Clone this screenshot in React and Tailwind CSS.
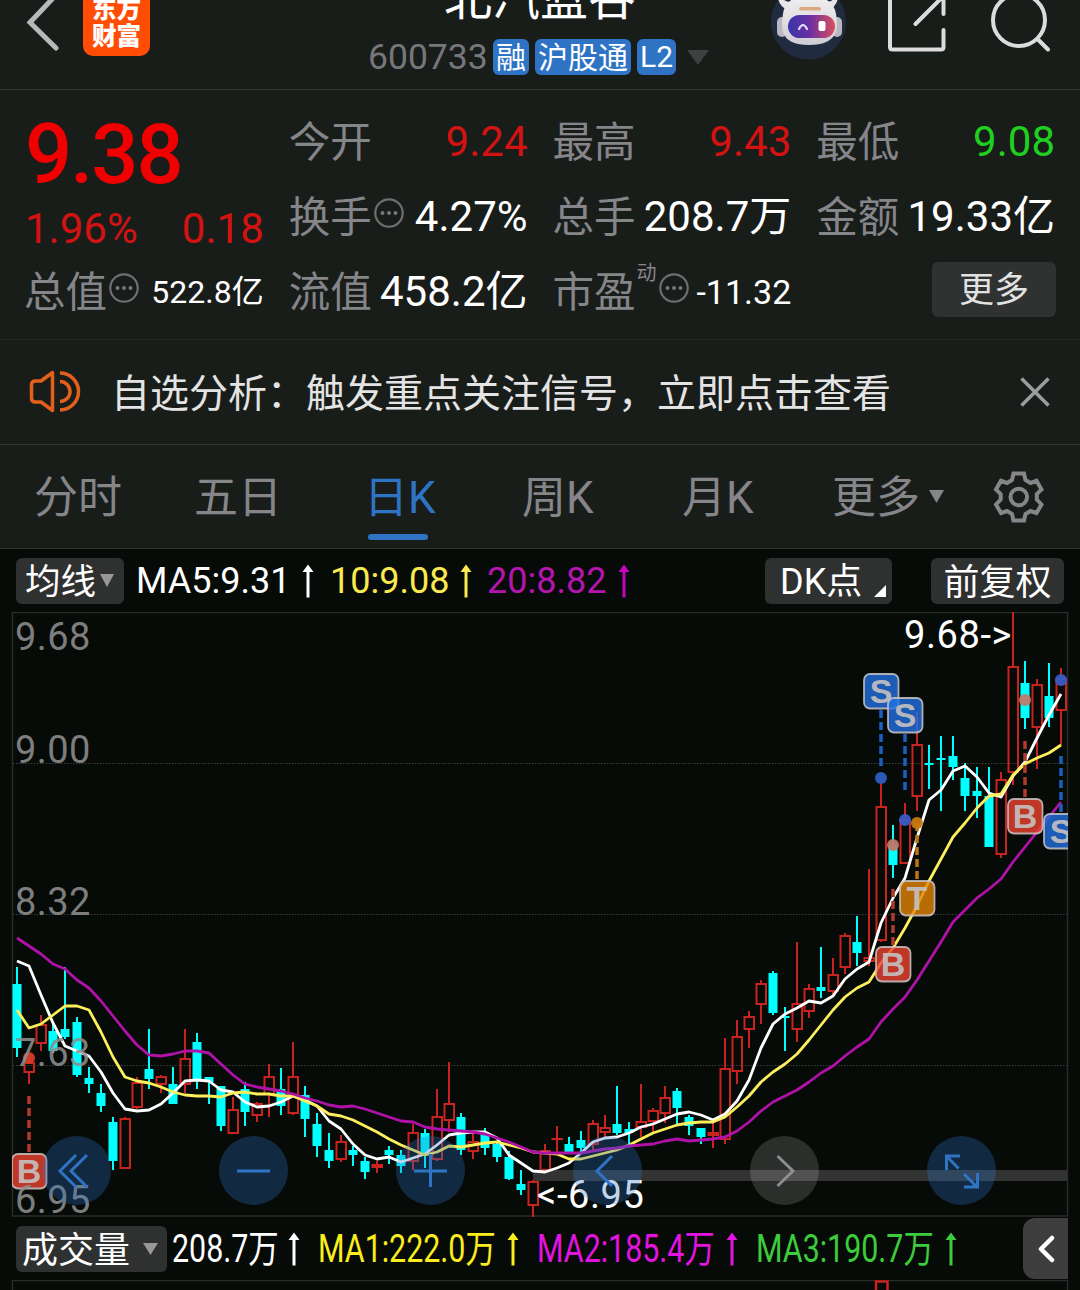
import React from 'react'

// x of the first candle and the distance between two candles
const START = 17
const STEP = 12

// [direction, high, body top, body bottom, low]
const candles = [
    ['d', 967, 984, 1048, 1057], ['u', 1056, 1063, 1072, 1084], ['u', 1015, 1025, 1043, 1051], ['d', 1023, 1031, 1051, 1053],
    ['d', 967, 1029, 1037, 1039], ['d', 1017, 1022, 1075, 1077], ['d', 1067, 1078, 1084, 1093], ['d', 1084, 1093, 1106, 1112],
    ['d', 1117, 1122, 1161, 1170], ['u', 1117, 1119, 1168, 1169], ['u', 1077, 1083, 1107, 1109], ['d', 1029, 1069, 1079, 1089],
    ['u', 1075, 1077, 1084, 1093], ['d', 1067, 1084, 1104, 1104], ['u', 1029, 1059, 1084, 1093], ['d', 1033, 1042, 1079, 1089],
    ['d', 1077, 1077, 1082, 1104], ['d', 1086, 1086, 1126, 1131], ['u', 1097, 1110, 1133, 1134], ['d', 1082, 1089, 1112, 1126],
    ['u', 1102, 1104, 1115, 1122], ['u', 1064, 1077, 1094, 1117], ['d', 1068, 1089, 1106, 1115], ['u', 1042, 1077, 1113, 1115],
    ['d', 1086, 1095, 1119, 1137], ['d', 1113, 1124, 1146, 1157], ['d', 1133, 1150, 1161, 1168], ['u', 1135, 1142, 1159, 1162],
    ['d', 1146, 1150, 1155, 1166], ['d', 1157, 1161, 1172, 1179], ['u', 1161, 1165, 1167, 1173], ['d', 1146, 1150, 1155, 1164],
    ['d', 1150, 1155, 1166, 1173], ['u', 1124, 1133, 1161, 1170], ['d', 1129, 1133, 1153, 1168], ['u', 1089, 1117, 1159, 1161],
    ['u', 1062, 1104, 1120, 1132], ['d', 1113, 1117, 1150, 1155], ['u', 1133, 1142, 1151, 1159], ['d', 1128, 1133, 1148, 1155],
    ['d', 1141, 1144, 1157, 1162], ['d', 1151, 1157, 1179, 1180], ['d', 1170, 1184, 1190, 1195], ['u', 1180, 1182, 1205, 1217],
    ['u', 1144, 1151, 1170, 1171], ['u', 1126, 1139, 1139, 1152], ['d', 1137, 1144, 1153, 1153], ['d', 1131, 1140, 1148, 1152],
    ['u', 1120, 1124, 1144, 1150], ['u', 1115, 1128, 1132, 1137], ['d', 1086, 1124, 1133, 1135], ['d', 1122, 1129, 1133, 1144],
    ['u', 1084, 1122, 1127, 1137], ['u', 1108, 1111, 1121, 1132], ['u', 1086, 1098, 1113, 1123], ['d', 1088, 1091, 1108, 1124],
    ['d', 1115, 1117, 1126, 1135], ['d', 1128, 1128, 1137, 1144], ['u', 1122, 1133, 1135, 1148], ['u', 1038, 1069, 1139, 1144],
    ['u', 1020, 1037, 1071, 1084], ['u', 1011, 1017, 1029, 1048], ['u', 980, 984, 1004, 1024], ['d', 971, 973, 1013, 1015],
    ['d', 1007, 1017, 1017, 1051], ['u', 942, 1004, 1029, 1042], ['u', 984, 989, 1011, 1018], ['d', 947, 987, 991, 998],
    ['u', 958, 975, 991, 997], ['u', 933, 936, 967, 974], ['d', 916, 942, 953, 966], ['u', 869, 958, 961, 966],
    ['u', 778, 807, 940, 942], ['d', 825, 845, 865, 878], ['u', 803, 820, 863, 864], ['u', 712, 745, 796, 811],
    ['d', 745, 764, 764, 789], ['d', 736, 759, 759, 811], ['d', 736, 756, 767, 780], ['d', 763, 778, 796, 811],
    ['d', 767, 791, 796, 818], ['d', 767, 796, 847, 847], ['u', 772, 780, 854, 858], ['u', 612, 667, 772, 785],
    ['d', 661, 683, 718, 729], ['u', 679, 685, 727, 769], ['d', 663, 696, 718, 727], ['u', 668, 679, 710, 745],
]

const ma5 = [
    961, 966, 995, 1023, 1046, 1051, 1056, 1072, 1093, 1109, 1111, 1110, 1104, 1093, 1081, 1080, 1081, 1090, 1092, 1102, 1107, 1106,
    1102, 1096, 1100, 1106, 1121, 1129, 1144, 1155, 1159, 1157, 1162, 1158, 1154, 1145, 1135, 1133, 1132, 1132, 1138, 1155, 1163, 1171,
    1172, 1168, 1163, 1153, 1142, 1138, 1137, 1133, 1127, 1124, 1119, 1114, 1112, 1115, 1120, 1114, 1101, 1080, 1048, 1024, 1014, 1008,
    1001, 1003, 996, 979, 969, 962, 923, 898, 878, 838, 800, 790, 771, 766, 777, 793, 797, 776, 762, 738, 715, 694,
]

const ma10 = [
    1010, 1028, 1024, 1015, 1006, 1006, 1010, 1032, 1057, 1077, 1081, 1083, 1087, 1092, 1095, 1096, 1096, 1097, 1093, 1092, 1094, 1094,
    1096, 1096, 1101, 1106, 1114, 1116, 1120, 1126, 1132, 1139, 1145, 1150, 1155, 1152, 1146, 1147, 1145, 1143, 1142, 1145, 1148, 1152,
    1153, 1154, 1159, 1159, 1156, 1153, 1150, 1145, 1139, 1133, 1129, 1125, 1123, 1122, 1122, 1117, 1107, 1096, 1082, 1072, 1064, 1054,
    1040, 1025, 1010, 997, 988, 982, 963, 948, 928, 906, 881, 859, 837, 823, 808, 796, 794, 775, 764, 758, 753, 745,
]

const ma20 = [
    938, 946, 954, 964, 969, 980, 988, 1001, 1016, 1031, 1045, 1055, 1056, 1054, 1051, 1051, 1053, 1064, 1075, 1084, 1087, 1089,
    1091, 1094, 1098, 1101, 1105, 1107, 1106, 1109, 1113, 1117, 1121, 1122, 1127, 1129, 1130, 1131, 1132, 1134, 1138, 1142, 1147, 1152,
    1153, 1153, 1153, 1153, 1151, 1149, 1148, 1146, 1145, 1144, 1141, 1139, 1141, 1140, 1139, 1137, 1131, 1122, 1111, 1102, 1096, 1090,
    1082, 1073, 1066, 1056, 1047, 1039, 1022, 1009, 997, 980, 961, 942, 922, 910, 898, 889, 879, 862, 847, 832, 817, 802,
]

const signals = [
    { type: 'B', x: 29, y: 1171, line: [1096, 1152], dot: 1058, dotColor: '#d93a2a' },
    { type: 'S', x: 881, y: 691, line: [710, 767], dot: 778, dotColor: '#2b60c0' },
    { type: 'S', x: 905, y: 715, line: [734, 791], dot: 820, dotColor: '#3a5cc8' },
    { type: 'T', x: 917, y: 898, line: [823, 880], dot: 823, dotColor: '#c87a10' },
    { type: 'B', x: 893, y: 964, line: [889, 946], dot: 845, dotColor: '#c07a6c' },
    { type: 'B', x: 1025, y: 816, line: [741, 797], dot: 700, dotColor: '#c07a6c' },
    { type: 'S', x: 1061, y: 831, line: [756, 812], dot: 680, dotColor: '#3a5cc8' },
]

const signalColors = { B: '#b23a2a', S: '#1b5fc1', T: '#bf7610' }

// the badges are see-through, so their own fill is brighter
const badgeColors = { B: '#ee4230', S: '#2270e4', T: '#e58506' }

const labels = [
    ['9.68', 650],
    ['9.00', 763],
    ['8.32', 915],
    ['7.63', 1066],
    ['6.95', 1213],
]

const toPoints = (values) => values.map((y, idx) => `${START + idx * STEP},${y}`).join(' ')

const InfoDots = () => (
    <svg viewBox="0 0 30 30" className="w-[30px] h-[30px] shrink-0 -mt-2 ml-0.5" fill="#77777a">
        <circle cx="15" cy="15" r="13.7" fill="none" stroke="#6e6e70" strokeWidth="2.2" />
        <circle cx="8.5" cy="15" r="2" />
        <circle cx="15" cy="15" r="2" />
        <circle cx="21.5" cy="15" r="2" />
    </svg>
)

const UpArrow = ({ className }) => (
    <svg viewBox="0 0 12 34" className={`w-3 h-[34px] shrink-0 ${className}`} fill="currentColor">
        <path d="M6 0.500 L11.500 8 H7.500 V33.500 H4.500 V8 H0.500 Z" />
    </svg>
)

const Header = () => (
    <header className="h-[90px] border-b border-[#303230] flex items-start overflow-hidden">
        <svg viewBox="0 0 60 60" className="w-[60px] h-[60px] shrink-0" fill="none" stroke="#b9b9b9" strokeWidth="5">
            <path d="M56 -5 L30 22.5 L56 48" strokeLinecap="round" />
        </svg>
        <div className="ml-[23px] -mt-[11px] w-[67px] h-[67px] shrink-0 rounded-[10px] bg-[#ff4d05] text-white font-black text-[24.5px] leading-[27px] text-center pt-[7px]">
            东方<br />财富
        </div>
        <div className="ml-[218px] w-[343px] shrink-0">
            <h1 className="text-[48px] leading-[48px] -mt-[25px] ml-[76px] text-white">北汽蓝谷</h1>
            <div className="flex items-center h-9 mt-4">
                <span className="text-[35.5px] leading-9 text-[#77777b] w-[125px]">600733</span>
                <span className="h-9 w-9 rounded-md bg-[#2f74c4] text-white text-[30px] leading-[38px] text-center">融</span>
                <span className="h-9 w-24 ml-1.5 rounded-md bg-[#2f74c4] text-white text-[30px] leading-[38px] text-center">沪股通</span>
                <span className="h-9 w-[39px] ml-1.5 rounded-md bg-[#2f74c4] text-white text-[30px] leading-9 text-center">L2</span>
                <svg viewBox="0 0 22 15" className="w-[22px] h-[15px] ml-[11px]" fill="#3f4040">
                    <path d="M0 0 H22 L11 15 Z" />
                </svg>
            </div>
        </div>
        <Robot />
        <svg viewBox="0 0 62 60" className="w-[62px] h-[60px] ml-[39px] shrink-0" fill="none" stroke="#dcdcdc" strokeWidth="4" strokeLinecap="round" strokeLinejoin="round">
            <path d="M4 -6 V47 Q4 49.500 6.500 49.500 H55 Q57.500 49.500 57.500 47 V30" />
            <path d="M57.500 14 V-4 L29.500 24" />
        </svg>
        <svg viewBox="0 0 64 60" className="w-16 h-[60px] ml-[40px] shrink-0" fill="none" stroke="#dcdcdc" strokeWidth="4" strokeLinecap="round">
            <circle cx="31" cy="20" r="26" />
            <path d="M49.500 39 L60 49.500" />
        </svg>
    </header>
)

const Robot = () => (
    <svg viewBox="0 0 76 60" className="w-[76px] h-[60px] shrink-0 ml-[60px]">
        <defs>
            <linearGradient id="visor" x1="0" x2="1">
                <stop offset="0" stopColor="#3a35a8" />
                <stop offset="0.45" stopColor="#6a2fa5" />
                <stop offset="1" stopColor="#d8505c" />
            </linearGradient>
            <linearGradient id="shell" x1="0" x2="0" y1="0" y2="1">
                <stop offset="0" stopColor="#f1eff0" />
                <stop offset="1" stopColor="#cfcdd4" />
            </linearGradient>
        </defs>
        <circle cx="37.500" cy="22" r="37.500" fill="#202b40" />
        <path d="M7 -3 Q8 7 17 10 L20 2 Q13 2 11 -3 Z M67 -3 Q66 7 57 10 L54 2 Q62 2 63 -3 Z" fill="#e8e6e8" />
        <rect x="6" y="17" width="10" height="20" rx="5" fill="#b9b8c0" />
        <rect x="61" y="17" width="10" height="20" rx="5" fill="#b9b8c0" />
        <path d="M12 14 Q14 -4 38 -4 Q62 -4 65 14 Q67 24 65 32 Q60 45 38 45 Q16 45 12 32 Q10 24 12 14 Z" fill="url(#shell)" />
        <rect x="28" y="7" width="22" height="3.500" rx="1.700" fill="#d9a981" />
        <rect x="17" y="15" width="47" height="23" rx="11.500" fill="url(#visor)" />
        <path d="M28 29 Q32 21 36 29" fill="none" stroke="#e6ddff" strokeWidth="2.200" strokeLinecap="round" />
        <rect x="47.500" y="21" width="7" height="10" rx="2" fill="#fff" />
    </svg>
)

const Stat = ({ label, value, info, color = 'text-white' }) => (
    <div className="h-[75px] flex items-center justify-between">
        <span className="-ml-px flex items-center text-[41.5px] text-[#85858a]">
            <span className="pt-[3px]">{label}</span>
            {info && <InfoDots />}
        </span>
        <span className={`text-[42px] ${color}`}>{value}</span>
    </div>
)

const Quote = () => (
    <section className="h-[250px] border-b border-[#262826] pl-[26px] pr-[25px] pt-[14px] grid grid-cols-4 gap-x-[26px] leading-none whitespace-nowrap">
        <div className="-ml-px">
            <div className="h-[100px] flex items-center text-[83px] tracking-[-2px] font-medium text-[#f00000]">9.38</div>
            <div className="h-[50px] flex items-center justify-between text-[42px] text-[#d31212]">
                <span>1.96%</span>
                <span>0.18</span>
            </div>
            <div className="h-[75px] flex items-center justify-between">
                <span className="-ml-px flex items-center text-[41.5px] text-[#85858a]">
                    <span className="pt-[3px]">总值</span>
                    <InfoDots />
                </span>
                <span className="text-[32px] text-white">522.8亿</span>
            </div>
        </div>
        <div>
            <Stat label="今开" value="9.24" color="text-[#d31212]" />
            <Stat label="换手" value="4.27%" info />
            <Stat label="流值" value="458.2亿" />
        </div>
        <div>
            <Stat label="最高" value="9.43" color="text-[#d31212]" />
            <Stat label="总手" value="208.7万" />
            <div className="h-[75px] flex items-center justify-between">
                <span className="-ml-px flex items-center text-[41.5px] text-[#85858a]">
                    <span className="pt-[3px]">市盈</span>
                    <span className="text-[20px] -mt-[38px] ml-px">动</span>
                    <InfoDots />
                </span>
                <span className="text-[34px] text-white">-11.32</span>
            </div>
        </div>
        <div>
            <Stat label="最低" value="9.08" color="text-[#1fd01f]" />
            <Stat label="金额" value="19.33亿" />
            <div className="h-[75px] flex items-center justify-end">
                <button className="w-[124px] h-[55px] -mt-1 -mr-px pt-0.5 rounded-md bg-[#303131] text-[35px] text-[#e2e2e2]">更多</button>
            </div>
        </div>
    </section>
)

const Notice = () => (
    <section className="h-[105px] border-b border-[#303230] flex items-center">
        <svg viewBox="0 0 54 44" className="w-[54px] h-11 ml-[29px] shrink-0" fill="none" stroke="#e2601c" strokeWidth="3.500">
            <path d="M23.500 2.500 V40.500 L12 32 H6.500 Q2.500 32 2.500 28 V15 Q2.500 11 6.500 11 H12 Z" strokeLinejoin="round" />
            <path d="M31 11.500 A10 10 0 0 1 31 31.500" />
            <path d="M31 3 A18.500 18.500 0 0 1 31 40" />
        </svg>
        <p className="ml-7 pt-1 text-[39px] text-[#e4e4e4] leading-none whitespace-nowrap">自选分析：触发重点关注信号，立即点击查看</p>
        <svg viewBox="0 0 30 30" className="w-[30px] h-[30px] ml-auto mr-[30px]" stroke="#9d9d9d" strokeWidth="3.500">
            <path d="M1.500 1.500 L28.500 28.500 M28.500 1.500 L1.500 28.500" />
        </svg>
    </section>
)

const Tabs = () => (
    <nav className="h-[104px] border-b border-[#303230] flex items-stretch text-[44px] leading-[107px] text-[#85858a] whitespace-nowrap">
        <span className="w-[88px] ml-[34px]">分时</span>
        <span className="w-[88px] ml-[72px]">五日</span>
        <span className="w-[73px] ml-[82px] text-[#2f74c4] flex flex-col">
            <span className="h-[89px]">日K</span>
            <span className="w-[60px] h-1.5 ml-1 rounded-full bg-[#2f74c4]" />
        </span>
        <span className="w-[73px] ml-[85px]">周K</span>
        <span className="w-[73px] ml-[87px]">月K</span>
        <span className="w-[88px] ml-[77px]">更多</span>
        <svg viewBox="0 0 15 13" className="w-[15px] h-[13px] ml-[9px] mt-[45px]" fill="#85858a">
            <path d="M0 0 H15 L7.500 13 Z" />
        </svg>
        <svg viewBox="0 0 52 52" className="w-[52px] h-[52px] ml-[49px] mt-[26px]" fill="none" stroke="#85858a" strokeWidth="4">
            <path d="M20.500 2.500 H31 L32.500 9 L37.500 12 L43.500 9.800 L48.500 18.500 L43.800 23 V28.500 L48.500 33.500 L43.500 42 L37.500 40 L32.500 43 L31 49.500 H20.500 L19 43 L14 40 L8 42 L3 33.500 L7.700 28.500 V23 L3 18.500 L8 9.800 L14 12 L19 9 Z" />
            <circle cx="25.800" cy="26" r="8.300" />
        </svg>
    </nav>
)

const MaBar = () => (
    <div className="h-[63px] flex items-center text-[36px] leading-none text-white whitespace-nowrap">
        <button className="ml-4 w-[108px] h-[46px] rounded-md bg-[#2f3030] flex items-center pl-[9px] text-[35.5px]">
            <span className="pt-1">均线</span>
            <svg viewBox="0 0 14 13" className="w-3.5 h-[13px] ml-1" fill="#98989b">
                <path d="M0 0 H14 L7 13 Z" />
            </svg>
        </button>
        <span className="ml-3 w-[154px]">MA5:9.31</span>
        <UpArrow className="ml-3" />
        <span className="ml-4 w-[120px] text-[#fbea4e]">10:9.08</span>
        <UpArrow className="ml-[10px] text-[#fbea4e]" />
        <span className="ml-[15px] w-[121px] text-[#b415ae]">20:8.82</span>
        <UpArrow className="ml-[10px] text-[#c800c0]" />
        <button className="ml-auto w-[127px] h-[46px] rounded-md bg-[#2f3030] flex items-center pl-[15px]">
            <span className="pt-0.5">DK点</span>
            <svg viewBox="0 0 12 12" className="w-3 h-3 ml-3 mt-5" fill="#fff">
                <path d="M12 0 V12 H0 Z" />
            </svg>
        </button>
        <button className="ml-[39px] mr-4 w-[133px] h-[46px] pt-1 rounded-md bg-[#2f3030]">前复权</button>
    </div>
)

const Candle = ({ data, x }) => {
    const [dir, high, top, bottom, low] = data

    if (dir === 'd') {
        return (
            <g fill="#00ffff">
                <rect x={x - 1} y={high} width="2" height={low - high} />
                <rect x={x - 4.5} y={top - (top === bottom ? 1 : 0)} width="9" height={Math.max(bottom - top, 2)} />
            </g>
        )
    }

    return (
        <g stroke="#c8231f" strokeWidth="2" fill="none">
            <path d={`M${x} ${high} V${top} M${x} ${bottom} V${low}`} />
            <rect x={x - 4.5} y={top} width="9.5" height={Math.max(bottom - top, 0.1)} />
        </g>
    )
}

const Signal = ({ type, x, y, line, dot, dotColor }) => (
    <g>
        <path d={`M${x} ${line[0]} V${line[1]}`} stroke={signalColors[type]} strokeWidth="3.500" strokeDasharray="8 4" />
        <circle cx={x} cy={dot} r="6" fill={dotColor} opacity="0.95" />
        <rect x={x - 17} y={y - 17} width="34.500" height="34.500" rx="6" fill={badgeColors[type]} fillOpacity="0.8" stroke="#c9c4c4" strokeOpacity="0.85" strokeWidth="1.800" />
        <text x={x} y={y + 12} textAnchor="middle" fontSize="34" fontWeight="bold" fill="#c6c0c2" fillOpacity="0.92" style={{ fontFamily: '"Liberation Sans", sans-serif' }}>{type}</text>
    </g>
)

const controls = [
    <path d="M34 19 L18 35 L34 51 M45 19 L29 35 L45 51" />,
    <path d="M18 35 H51" />,
    <path d="M18 35 H51 M34.500 18 V51" />,
    <path d="M39 20 L24 35 L39 50" />,
    <path d="M27.500 20 L43 35 L27.500 50" />,
    <path d="M19.500 34 V20 H33 M19.500 20 L31.500 32.500 M37 38 L50 51 M37 51 H50.500 V37" />,
]

const Chart = () => (
    <div className="relative h-[605px]">
        <svg viewBox="0 612 1080 605" className="block w-[1080px] h-[605px]">
            <defs>
                <clipPath id="plot">
                    <rect x="12" y="611" width="1056" height="607" />
                </clipPath>
            </defs>
            <rect x="12.500" y="612.500" width="1055" height="603.500" fill="none" stroke="#2a2c2b" strokeWidth="1.500" />
            <path d="M13 763.500 H1067 M13 914.500 H1067 M13 1065.500 H1067" stroke="#3a3c3a" strokeDasharray="1.500 1.500" />
            <rect x="533" y="1170" width="534" height="11" fill="#333333" />
            <g clipPath="url(#plot)">
                {candles.map((candle, idx) => (
                    <Candle key={idx} data={candle} x={START + idx * STEP} />
                ))}
                <g fill="none" strokeWidth="2.800" strokeLinejoin="round">
                    <polyline points={toPoints(ma5)} stroke="#ffffff" />
                    <polyline points={toPoints(ma10)} stroke="#fdee5c" />
                    <polyline points={toPoints(ma20)} stroke="#b012a8" />
                </g>
                {signals.map((signal, idx) => (
                    <Signal key={idx} {...signal} />
                ))}
            </g>
            <g fontSize="38" letterSpacing="0.4" fill="#8e8e8e" fillOpacity="0.9">
                {labels.map(([text, y]) => (
                    <text key={text} x="15" y={y}>{text}</text>
                ))}
            </g>
            <g fontSize="38" letterSpacing="0.6" fill="#ffffff">
                <text x="904" y="648">9.68-&gt;</text>
                <text x="537" y="1208">&lt;-6.95</text>
            </g>
        </svg>
        <div className="absolute left-[42px] top-[524px] flex gap-[108px]">
            {controls.map((icon, idx) => (
                <button key={idx} className={`w-[69px] h-[69px] rounded-full ${idx === 4 ? 'bg-white/15' : 'bg-[#2f74c8]/30'}`}>
                    <svg viewBox="0 0 69 69" fill="none" stroke={idx === 4 ? '#8d8d90' : '#2f74c4'} strokeWidth="3">{icon}</svg>
                </button>
            ))}
        </div>
    </div>
)

// the volume figures are set in a narrowed face
const Narrow = ({ children, className }) => (
    <span className={`shrink-0 ${className}`}>
        <span className="inline-block origin-left scale-x-[0.8]">{children}</span>
    </span>
)

const VolumeBar = () => (
    <div className="h-[63px] flex items-center text-[38px] leading-none text-white whitespace-nowrap">
        <button className="ml-4 w-[151px] h-[46px] shrink-0 rounded-md bg-[#2f3030] flex items-center pl-1.5 text-[36px]">
            <span className="pt-1">成交量</span>
            <svg viewBox="0 0 15 12" className="w-[15px] h-3 ml-[13px]" fill="#98989b">
                <path d="M0 0 H15 L7.500 12 Z" />
            </svg>
        </button>
        <Narrow className="ml-[5px] w-[104px]">208.7万</Narrow>
        <UpArrow className="ml-3" />
        <Narrow className="ml-[18px] w-[177px] text-[#fcee1c]">MA1:222.0万</Narrow>
        <UpArrow className="ml-3 text-[#fcee1c]" />
        <Narrow className="ml-[18px] w-[177px] text-[#e414e0]">MA2:185.4万</Narrow>
        <UpArrow className="ml-3 text-[#e414e0]" />
        <Narrow className="ml-[18px] w-[177px] text-[#3ccc3c]">MA3:190.7万</Narrow>
        <UpArrow className="ml-3 text-[#3ccc3c]" />
        <button className="ml-auto mr-3 w-[45px] h-[61px] rounded-l-xl bg-[#3d3e3d] flex items-center justify-center">
            <svg viewBox="0 0 18 28" className="w-[18px] h-7" fill="none" stroke="#fff" strokeWidth="4.500" strokeLinecap="round" strokeLinejoin="round">
                <path d="M15 3 L4 14 L15 25" />
            </svg>
        </button>
    </div>
)

const App = () => {
    return (
        <div className='w-[1080px] h-[1290px] overflow-hidden bg-[#191d1a] font-["Roboto","Noto_Sans_CJK_SC",sans-serif]'>
            <Header />
            <Quote />
            <Notice />
            <Tabs />
            <main className="bg-[#070b08]">
                <MaBar />
                <Chart />
                <VolumeBar />
                <svg viewBox="0 0 1080 12" className="block w-[1080px] h-3" fill="none">
                    <path d="M12.500 12 V0.500 H1067.500 V12" stroke="#2a2c2b" strokeWidth="1.500" />
                    <path d="M876 12 V1.500 H887.500 V12" stroke="#c8231f" strokeWidth="2.500" />
                </svg>
            </main>
        </div>
    )
}

export default App
